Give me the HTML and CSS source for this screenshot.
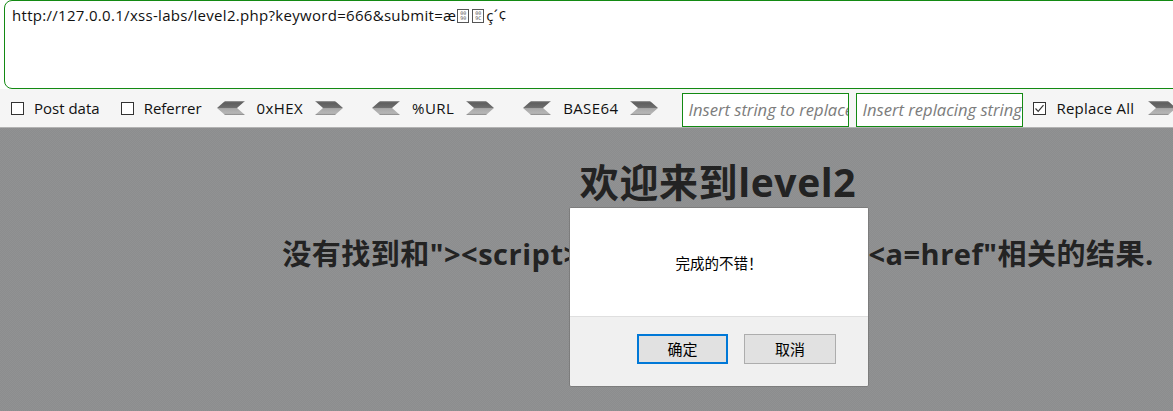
FILE: index.html
```html
<!DOCTYPE html>
<html>
<head>
<meta charset="utf-8">
<link rel="stylesheet" href="styles.css">
</head>
<body>
<div class="hackbar">
  <div class="url-wrap">
    <div class="url">http://127.0.0.1/xss-labs/level2.php?keyword=666&amp;submit=æ<span class="hexbox"><span>00</span><span>90</span></span><span class="hexbox"><span>00</span><span>9C</span></span>ç´¢</div>
  </div>
  <div class="toolbar">
    <label class="opt opt-post"><span class="cb"></span>Post data</label>
    <label class="opt opt-ref"><span class="cb"></span>Referrer</label>
    <div class="enc enc-hex">
      <svg class="arr" width="28" height="14" viewBox="0 0 28 14"><defs><linearGradient id="g1" x1="0" y1="0" x2="0" y2="1"><stop offset="0" stop-color="#a0a0a0"/><stop offset="0.12" stop-color="#5e5e5e"/><stop offset="0.46" stop-color="#6c6c6c"/><stop offset="0.54" stop-color="#a8a8a8"/><stop offset="0.88" stop-color="#b6b6b6"/><stop offset="1" stop-color="#858585"/></linearGradient></defs><polygon points="8,0 28,0 20,7 28,14 8,14 0,7" fill="url(#g1)"/></svg>
      <span class="enc-label">0xHEX</span>
      <svg class="arr" width="28" height="14" viewBox="0 0 28 14"><polygon points="0,0 20,0 28,7 20,14 0,14 8,7" fill="url(#g1)"/></svg>
    </div>
    <div class="enc enc-url">
      <svg class="arr" width="28" height="14" viewBox="0 0 28 14"><polygon points="8,0 28,0 20,7 28,14 8,14 0,7" fill="url(#g1)"/></svg>
      <span class="enc-label">%URL</span>
      <svg class="arr" width="28" height="14" viewBox="0 0 28 14"><polygon points="0,0 20,0 28,7 20,14 0,14 8,7" fill="url(#g1)"/></svg>
    </div>
    <div class="enc enc-b64">
      <svg class="arr" width="28" height="14" viewBox="0 0 28 14"><polygon points="8,0 28,0 20,7 28,14 8,14 0,7" fill="url(#g1)"/></svg>
      <span class="enc-label">BASE64</span>
      <svg class="arr" width="28" height="14" viewBox="0 0 28 14"><polygon points="0,0 20,0 28,7 20,14 0,14 8,7" fill="url(#g1)"/></svg>
    </div>
    <div class="field field1">Insert string to replace</div>
    <div class="field field2">Insert replacing string</div>
    <label class="opt opt-ra"><span class="cb checked"><svg width="11" height="11" viewBox="0 0 11 11"><path d="M1.5 5.5 L4.2 8.3 L9.5 2.2" fill="none" stroke="#333" stroke-width="1.2"/></svg></span>Replace All</label>
    <svg class="arr arr-last" width="28" height="14" viewBox="0 0 28 14"><polygon points="0,0 20,0 28,7 20,14 0,14 8,7" fill="url(#g1)"/></svg>
  </div>
</div>
<div class="page">
  <div class="content">
    <h1 class="title">欢迎来到level2</h1>
    <h2 class="result">没有找到和"&gt;&lt;script&gt;alert('xss')&lt;/script&gt;&lt;a=href"相关的结果.</h2>
  </div>
</div>
<div class="dialog">
  <div class="dlg-body">完成的不错！</div>
  <div class="dlg-foot">
    <button class="btn btn-primary">确定</button>
    <button class="btn">取消</button>
  </div>
</div>
</body>
</html>
```
FILE: styles.css
```css
html, body {
  margin: 0;
  padding: 0;
  width: 1173px;
  height: 411px;
  overflow: hidden;
  background: #8e8f90;
}
body {
  position: relative;
  font-family: "Open Sans", "Noto Sans", sans-serif;
}
.hackbar {
  background: #f5f5f5;
  border-bottom: 1px solid #b3b3b3;
  height: 128px;
  box-sizing: border-box;
}
.url-wrap {
  background: #fff;
  height: 89px;
  padding-left: 4px;
  box-sizing: border-box;
}
.url {
  width: 1200px;
  height: 89px;
  box-sizing: border-box;
  border: 1px solid #138a13;
  border-radius: 8px;
  padding: 4px 0 0 7px;
  font-size: 15px;
  letter-spacing: 0.3px;
  line-height: 20px;
  color: #111;
  white-space: nowrap;
}
.hexbox {
  display: inline-flex;
  flex-direction: column;
  justify-content: center;
  align-items: center;
  width: 12px;
  height: 14px;
  border: 1px solid #555;
  box-sizing: border-box;
  font-size: 5px;
  letter-spacing: 0;
  line-height: 5px;
  color: #555;
  margin: 0 2px 0 1px;
  vertical-align: middle;
  position: relative;
  top: -1px;
  font-family: "DejaVu Sans Mono", monospace;
}
.toolbar {
  display: flex;
  align-items: center;
  height: 38px;
  padding-left: 11px;
  font-size: 15px;
  color: #111;
  white-space: nowrap;
}
.toolbar > * { flex-shrink: 0; }
.opt {
  display: flex;
  align-items: center;
}
.opt .cb {
  width: 13px;
  height: 13px;
  box-sizing: border-box;
  border: 1px solid #333;
  background: #fff;
  margin-right: 10px;
  display: flex;
  align-items: center;
  justify-content: center;
}
.opt .cb svg { display: block; }
.opt-post { margin-right: 21px; }
.opt-ref { margin-right: 15px; }
.enc {
  display: flex;
  align-items: center;
}
.enc-hex { margin-right: 29px; }
.enc-url { margin-right: 29px; }
.enc-b64 { margin-right: 25px; }
.arr { display: block; }
.enc-label {
  margin: 0 12px;
  line-height: 20px;
  letter-spacing: 0.4px;
}
.field {
  height: 34px;
  box-sizing: border-box;
  border: 1px solid #138a13;
  background: #fff;
  font-style: italic;
  color: #7c7c7c;
  font-size: 16.6px;
  line-height: 32px;
  padding-left: 5px;
  overflow: hidden;
  margin-top: 3px;
}
.field1 { width: 167px; margin-left: -1px; margin-right: 7px; }
.field2 { width: 167px; margin-right: 10px; }
.opt-ra { margin-right: 14px; letter-spacing: 0.2px; }
.opt-ra .cb { margin-right: 10px; }
.page {
  height: 283px;
  overflow: hidden;
  background-color: #8e8f90;
  background-image: repeating-conic-gradient(#8c8d8e 0 25%, #919293 0 50%);
  background-size: 2px 2px;
}
.content {
  width: 1436px;
  text-align: center;
  color: #232323;
  font-family: "Open Sans", "Noto Sans CJK SC", sans-serif;
  font-weight: bold;
}
.title {
  margin: 30px 0 0;
  font-size: 39px;
  line-height: 48px;
  letter-spacing: 0.6px;
}
.result {
  margin: 31px 0 0;
  font-size: 29px;
  line-height: 34px;
  letter-spacing: 0.5px;
}
.dialog {
  position: absolute;
  left: 569px;
  top: 207px;
  width: 300px;
  height: 180px;
  box-sizing: border-box;
  border: 1px solid #7d7d7d;
  border-radius: 2px;
  background: #f0f0f0;
  display: flex;
  flex-direction: column;
  overflow: hidden;
  font-family: "Noto Sans CJK SC", sans-serif;
}
.dlg-body {
  height: 108px;
  background: #fff;
  border-bottom: 1px solid #dfdfdf;
  display: flex;
  align-items: center;
  justify-content: center;
  font-size: 14.5px;
  color: #000;
}
.dlg-foot {
  display: flex;
  justify-content: flex-end;
  gap: 16px;
  padding: 17px 32px 0 0;
}
.btn {
  width: 92px;
  height: 30px;
  box-sizing: border-box;
  border: 1px solid #adadad;
  background: #e1e1e1;
  font-family: "Noto Sans CJK SC", sans-serif;
  font-size: 15px;
  color: #000;
  padding: 0;
  line-height: 26px;
}
.btn-primary {
  border: 2px solid #0078d7;
  width: 91px;
}
```
